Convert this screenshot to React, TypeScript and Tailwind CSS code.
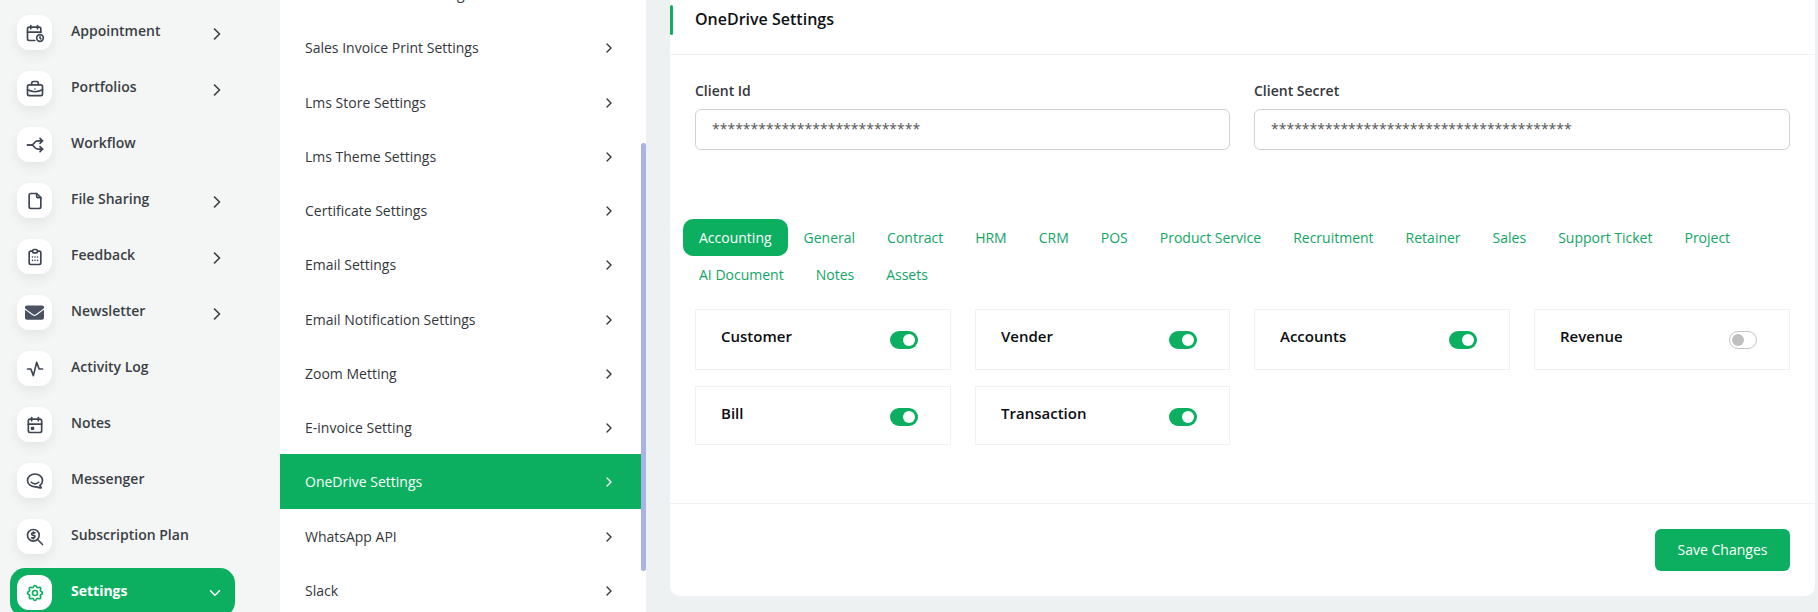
import { FaEnvelope } from "react-icons/fa";
import {
  TbActivity,
  TbArrowsSplit2,
  TbBrandHipchat,
  TbBriefcase,
  TbCalendarEvent,
  TbCalendarTime,
  TbChevronDown,
  TbChevronRight,
  TbFile,
  TbSettings,
  TbZoomMoney,
} from "react-icons/tb";
import type { ReactNode } from "react";

function FeedbackIcon() {
  return (
    <svg width="20" height="20" viewBox="0 0 24 24" fill="none" stroke="currentColor" strokeWidth="2" strokeLinecap="round" strokeLinejoin="round">
      <path d="M9 5H7a2 2 0 0 0-2 2v12a2 2 0 0 0 2 2h10a2 2 0 0 0 2-2V7a2 2 0 0 0-2-2h-2" />
      <rect x="9" y="3" width="6" height="4" rx="2" />
      <path d="M9 12h.01M15 12h.01M9 16h.01M15 16h.01M12 12h.01M12 16h.01" />
    </svg>
  );
}

const sideItems: { label: string; icon: ReactNode; arrow?: boolean }[] = [
  { label: "Appointment", icon: <TbCalendarTime size={20} />, arrow: true },
  { label: "Portfolios", icon: <TbBriefcase size={20} />, arrow: true },
  { label: "Workflow", icon: <TbArrowsSplit2 size={20} /> },
  { label: "File Sharing", icon: <TbFile size={20} />, arrow: true },
  { label: "Feedback", icon: <FeedbackIcon />, arrow: true },
  { label: "Newsletter", icon: <FaEnvelope size={19} className="text-[#4a5160]" />, arrow: true },
  { label: "Activity Log", icon: <TbActivity size={20} /> },
  { label: "Notes", icon: <TbCalendarEvent size={20} /> },
  { label: "Messenger", icon: <TbBrandHipchat size={20} /> },
  { label: "Subscription Plan", icon: <TbZoomMoney size={20} /> },
];

const subItems = [
  "Sales Order Print Settings",
  "Sales Invoice Print Settings",
  "Lms Store Settings",
  "Lms Theme Settings",
  "Certificate Settings",
  "Email Settings",
  "Email Notification Settings",
  "Zoom Metting",
  "E-invoice Setting",
  "OneDrive Settings",
  "WhatsApp API",
  "Slack",
];

const tabs = [
  "Accounting",
  "General",
  "Contract",
  "HRM",
  "CRM",
  "POS",
  "Product Service",
  "Recruitment",
  "Retainer",
  "Sales",
  "Support Ticket",
  "Project",
  "AI Document",
  "Notes",
  "Assets",
];

const switches = [
  { label: "Customer", on: true },
  { label: "Vender", on: true },
  { label: "Accounts", on: true },
  { label: "Revenue", on: false },
  { label: "Bill", on: true },
  { label: "Transaction", on: true },
];

function Toggle({ on }: { on: boolean }) {
  if (on) {
    return (
      <span className="flex h-[18px] w-[28px] shrink-0 items-center justify-end rounded-full bg-[#0caf60] pr-[3px]">
        <span className="h-[12px] w-[12px] rounded-full bg-white" />
      </span>
    );
  }
  return (
    <span className="flex h-[18px] w-[28px] shrink-0 items-center rounded-full border border-[#c4c4c4] bg-white pl-[2px]">
      <span className="h-[12px] w-[12px] rounded-full bg-[#bfbfbf]" />
    </span>
  );
}

function Field({ label, value }: { label: string; value: string }) {
  return (
    <div>
      <div className="mb-2 text-sm leading-[21px] font-[550] text-[#33373d]">{label}</div>
      <div className="flex h-[41px] items-center rounded-md border border-[#d0d3d6] px-[16px] pb-[1px] text-sm text-[#555]">
        {value}
      </div>
    </div>
  );
}

export default function App() {
  return (
    <div className="flex h-[612px] w-[1818px] overflow-hidden bg-[#eef1f2] font-['Open_Sans',sans-serif]">

      {/* Main sidebar */}
      <aside className="flex w-[280px] shrink-0 flex-col gap-[7px] bg-[#f4f6f6] pt-[8px] pl-[10px]">
        {sideItems.map((item) => (
          <div key={item.label} className="flex h-[49px] w-[225px] shrink-0 items-center pl-[7px] text-[#3a3f45]">
            <div className="flex h-[35px] w-[35px] items-center justify-center rounded-[12px] bg-white text-[#3f4653] shadow-[0_5px_12px_rgba(0,0,0,0.07)]">
              {item.icon}
            </div>
            <span className="mb-[3px] ml-[19px] flex-1 text-sm font-semibold">{item.label}</span>
            {item.arrow && <TbChevronRight size={20} className="mt-[3px] mr-[8px]" />}
          </div>
        ))}

        <div className="flex h-[49px] w-[225px] shrink-0 items-center rounded-[15px] bg-[#0caf60] pl-[7px] text-white">
          <div className="flex h-[35px] w-[35px] items-center justify-center rounded-[12px] bg-white text-[#0caf60]">
            <TbSettings size={20} />
          </div>
          <span className="mb-[3px] ml-[19px] flex-1 text-sm font-bold">Settings</span>
          <TbChevronDown size={18} className="mr-[11px]" />
        </div>
      </aside>

      {/* Settings menu */}
      <nav className="relative h-[612px] w-[366px] shrink-0 overflow-hidden bg-white">
        <div className="mt-[-34px] mr-[5px]">
          {subItems.map((item) => (
            <div
              key={item}
              className={
                item === "OneDrive Settings"
                  ? "flex h-[54.25px] items-center justify-between bg-[#0caf60] pt-[1px] pr-[24px] pl-[25px] text-sm text-white"
                  : "flex h-[54.25px] items-center justify-between pt-[2px] pr-[24px] pl-[25px] text-sm text-[#33373d]"
              }
            >
              <span>{item}</span>
              <TbChevronRight size={16} />
            </div>
          ))}
        </div>
        {/* scrollbar thumb */}
        <div className="absolute top-[143px] right-0 h-[428px] w-[5px] rounded-full bg-[#aab3e6]" />
      </nav>

      {/* OneDrive card */}
      <main className="ml-[24px] h-[596px] w-[1145px] shrink-0 overflow-hidden rounded-b-[10px] bg-white">
        <div className="flex h-[55px] border-b border-[#f0f1f2]">
          <div className="mt-[5px] h-[30px] w-[3px] rounded-sm bg-[#0caf60]" />
          <h2 className="mt-[7px] ml-[22px] text-base font-semibold text-[#0f1115]">OneDrive Settings</h2>
        </div>

        <div className="h-[449px] border-b border-[#f0f1f2] px-[25px] pt-[25px]">
          <div className="grid grid-cols-[535px_536px] gap-6">
            <Field label="Client Id" value="***************************" />
            <Field label="Client Secret" value="***************************************" />
          </div>

          <div className="mt-[69px] ml-[-12px] flex flex-wrap">
            {tabs.map((tab) => (
              <div
                key={tab}
                className={
                  tab === "Accounting"
                    ? "rounded-[10px] bg-[#0caf60] px-4 py-2 text-sm leading-[21px] text-white"
                    : "px-4 py-2 text-sm leading-[21px] text-[#12a566]"
                }
              >
                {tab}
              </div>
            ))}
          </div>

          <div className="mt-4 grid grid-cols-[256px_255px_256px_256px] gap-x-6 gap-y-4">
            {switches.map((row) => (
              <div
                key={row.label}
                className={
                  row.label === "Bill" || row.label === "Transaction"
                    ? "flex h-[59px] justify-between border border-[#f0f1f2] pr-[32px] pl-[25px]"
                    : "flex h-[61px] justify-between border border-[#f0f1f2] pr-[32px] pl-[25px]"
                }
              >
                <span className="mt-[16px] h-[21px] text-[15px] leading-[21px] font-[550] text-[#0b0d10]">{row.label}</span>
                <div className="mt-[21px]">
                  <Toggle on={row.on} />
                </div>
              </div>
            ))}
          </div>
        </div>

        <div className="flex justify-end px-[25px] pt-[25px]">
          <button className="h-[42px] w-[135px] rounded-md bg-[#0caf60] text-sm text-white">Save Changes</button>
        </div>
      </main>
    </div>
  );
}
